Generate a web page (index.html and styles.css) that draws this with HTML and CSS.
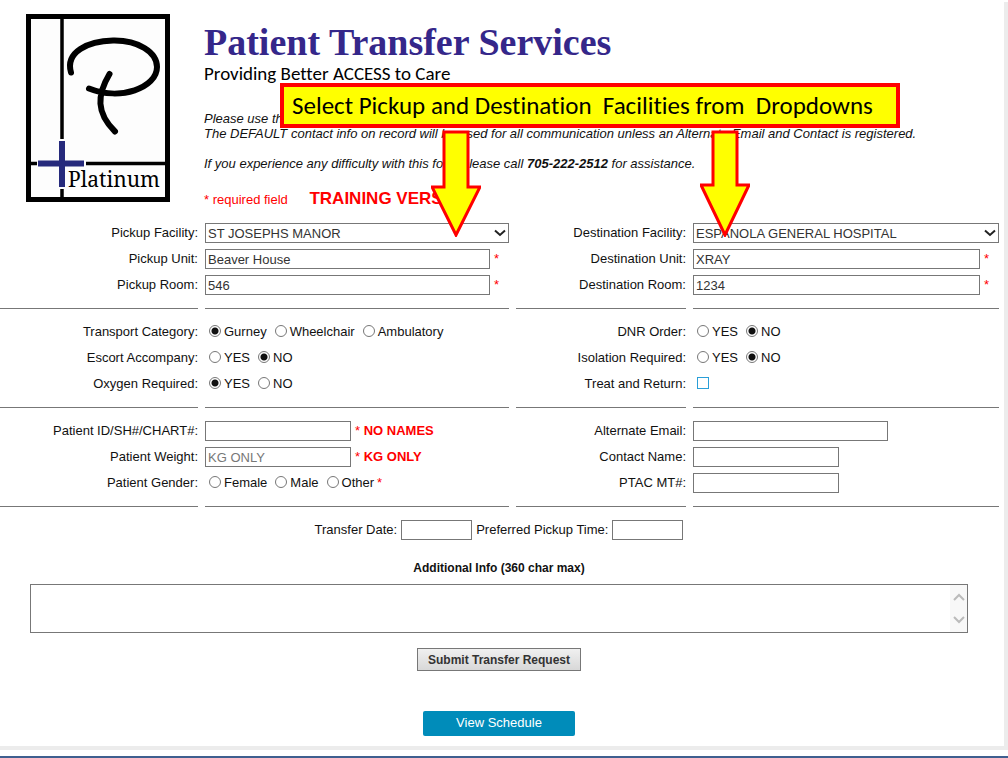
FILE: index.html
```html
<!DOCTYPE html>
<html lang="en">
<head>
    <meta charset="UTF-8">
    <meta name="viewport" content="width=device-width, initial-scale=1.0">
    <title>Patient Transfer Services</title>
    <link rel="stylesheet" href="styles.css">
</head>
<body>
    <div class="sheet">
        <!-- Logo and intro -->
        <header class="header">
            <svg class="logo" viewBox="0 0 144 188" role="img" aria-label="Platinum">
                <rect x="2.5" y="2.5" width="139" height="183" fill="#fdfdfd" stroke="#000" stroke-width="5"/>
                <path d="M36 4V125M36 175V184M4 149.500H11M60 149.500H140" fill="none" stroke="#000" stroke-width="3.500"/>
                <path d="M36 127V173M12 149.500H58" fill="none" stroke="#262a7c" stroke-width="6"/>
                <path d="M45 58.500C39 38 62 27 87 26.500C112 26 131 38 131 53C131 74 94 87 63 74.500M83.500 60C71 81 70 99 89 117.500" fill="none" stroke="#000" stroke-width="6" stroke-linecap="round"/>
                <text class="logo-text" x="42" y="173">Platinum</text>
            </svg>
            <div class="intro">
                <h1>Patient Transfer Services</h1>
                <p class="tagline">Providing Better ACCESS to Care</p>
                <p class="notes">Please use th<br>The DEFAULT contact info on record will be used for all communication unless an Alternate Email and Contact is registered.</p>
                <p class="notes">If you experience any difficulty with this form please call <b>705-222-2512</b> for assistance.</p>
                <p class="required">* required field <strong>TRAINING VERSION</strong></p>
            </div>
        </header>

        <form>
            <!-- Facilities -->
            <div class="grid">
                <label for="pickup-facility">Pickup Facility:</label>
                <div class="field facility">
                    <select id="pickup-facility"><option>ST JOSEPHS MANOR</option></select>
                    <svg class="chevron" viewBox="0 0 12 8"><path d="M1 1.500L6 6L11 1.500"/></svg>
                </div>
                <label for="dest-facility">Destination Facility:</label>
                <div class="field facility">
                    <select id="dest-facility"><option>ESPANOLA GENERAL HOSPITAL</option></select>
                    <svg class="chevron" viewBox="0 0 12 8"><path d="M1 1.500L6 6L11 1.500"/></svg>
                </div>

                <label for="pickup-unit">Pickup Unit:</label>
                <div class="field"><input class="long" type="text" id="pickup-unit" value="Beaver House"><span class="star">*</span></div>
                <label for="dest-unit">Destination Unit:</label>
                <div class="field"><input class="long" type="text" id="dest-unit" value="XRAY"><span class="star">*</span></div>

                <label for="pickup-room">Pickup Room:</label>
                <div class="field"><input class="long" type="text" id="pickup-room" value="546"><span class="star">*</span></div>
                <label for="dest-room">Destination Room:</label>
                <div class="field"><input class="long" type="text" id="dest-room" value="1234"><span class="star">*</span></div>
            </div>
            <div class="grid rule"><hr><hr><hr><hr></div>

            <!-- Transport details -->
            <div class="grid">
                <span class="label" id="category">Transport Category:</span>
                <div class="field choices" role="radiogroup" aria-labelledby="category">
                    <label><input type="radio" name="category" checked>Gurney</label>
                    <label><input type="radio" name="category">Wheelchair</label>
                    <label><input type="radio" name="category">Ambulatory</label>
                </div>
                <span class="label" id="dnr">DNR Order:</span>
                <div class="field choices" role="radiogroup" aria-labelledby="dnr">
                    <label><input type="radio" name="dnr">YES</label>
                    <label><input type="radio" name="dnr" checked>NO</label>
                </div>

                <span class="label" id="escort">Escort Accompany:</span>
                <div class="field choices" role="radiogroup" aria-labelledby="escort">
                    <label><input type="radio" name="escort">YES</label>
                    <label><input type="radio" name="escort" checked>NO</label>
                </div>
                <span class="label" id="isolation">Isolation Required:</span>
                <div class="field choices" role="radiogroup" aria-labelledby="isolation">
                    <label><input type="radio" name="isolation">YES</label>
                    <label><input type="radio" name="isolation" checked>NO</label>
                </div>

                <span class="label" id="oxygen">Oxygen Required:</span>
                <div class="field choices" role="radiogroup" aria-labelledby="oxygen">
                    <label><input type="radio" name="oxygen" checked>YES</label>
                    <label><input type="radio" name="oxygen">NO</label>
                </div>
                <label for="treat">Treat and Return:</label>
                <div class="field choices"><input type="checkbox" id="treat"></div>
            </div>
            <div class="grid rule"><hr><hr><hr><hr></div>

            <!-- Patient and contact -->
            <div class="grid">
                <label for="patient-id">Patient ID/SH#/CHART#:</label>
                <div class="field"><input class="short" type="text" id="patient-id"><span class="star">* <b>NO NAMES</b></span></div>
                <label for="email">Alternate Email:</label>
                <div class="field"><input class="medium" type="text" id="email"></div>

                <label for="weight">Patient Weight:</label>
                <div class="field"><input class="short" type="text" id="weight" placeholder="KG ONLY"><span class="star">* <b>KG ONLY</b></span></div>
                <label for="contact">Contact Name:</label>
                <div class="field"><input class="short" type="text" id="contact"></div>

                <span class="label" id="gender">Patient Gender:</span>
                <div class="field choices" role="radiogroup" aria-labelledby="gender">
                    <label><input type="radio" name="gender">Female</label>
                    <label><input type="radio" name="gender">Male</label>
                    <label><input type="radio" name="gender">Other <span class="star">*</span></label>
                </div>
                <label for="ptac">PTAC MT#:</label>
                <div class="field"><input class="short" type="text" id="ptac"></div>
            </div>
            <div class="grid rule"><hr><hr><hr><hr></div>

            <!-- Date, notes and buttons -->
            <div class="schedule">
                <label for="date">Transfer Date:</label>
                <input type="text" id="date">
                <label for="time">Preferred Pickup Time:</label>
                <input type="text" id="time">
            </div>
            <div class="info">
                <label for="info">Additional Info (360 char max)</label>
                <div class="info-box">
                    <textarea id="info" maxlength="360"></textarea>
                    <div class="scroller">
                        <svg viewBox="0 0 12 8"><path d="M1 7L6 2L11 7"/></svg>
                        <svg viewBox="0 0 12 8"><path d="M1 1L6 6L11 1"/></svg>
                    </div>
                </div>
            </div>
            <div class="actions">
                <button type="submit" class="submit">Submit Transfer Request</button>
                <a href="#" class="view">View Schedule</a>
            </div>
        </form>
    </div>

    <!-- Training callout over the form -->
    <div class="callout">Select Pickup and Destination&nbsp; Facilities from&nbsp; Dropdowns</div>
    <svg class="arrow arrow-pickup" viewBox="0 0 50 108"><path d="M13 3H37V58H49L25 106L1 58H13Z"/></svg>
    <svg class="arrow arrow-dest" viewBox="0 0 50 108"><path d="M13 3H37V56H49L25 106L1 56H13Z"/></svg>
</body>
</html>
```
FILE: styles.css
```css
* {
    box-sizing: border-box;
}

body {
    position: relative;
    margin: 0;
    padding: 2px 0 6px;
    background: #fff;
    border-bottom: 2px solid #3f5f8f;
    color: #111;
    font: 13px/20px "Liberation Sans", Arial, sans-serif;
}

.sheet {
    border-right: 4px solid #ececec;
    border-bottom: 4px solid #ececec;
    padding-bottom: 10px;
}

/* Header */
.header {
    display: flex;
    gap: 34px;
    padding: 12px 5px 0 26px;
}

.logo {
    flex: none;
    width: 144px;
    height: 188px;
}

.logo-text {
    font: 21px "Noto Serif", "Liberation Serif", serif;
}

.intro {
    flex: 1;
}

h1 {
    margin: 6px 0 0;
    color: #35278a;
    font: bold 38px/44px "Liberation Serif", "Times New Roman", serif;
}

.tagline {
    margin: 0 0 27px;
    color: #000;
    font: 19px/20px Carlito, Lato, sans-serif;
    font-variant-ligatures: none;
}

.notes {
    margin: 0 0 15px;
    line-height: 15px;
    font-style: italic;
}

.required {
    margin: 0;
    padding-top: 3px;
    color: #f00;
}

.required strong {
    margin-left: 18px;
    font-size: 17px;
}

/* Form rows */
form {
    padding-top: 13px;
}

.grid {
    display: grid;
    grid-template-columns: 198fr 304fr 170fr 306fr;
    gap: 6px 7px;
    padding-right: 5px;
}

.grid > label,
.label {
    text-align: right;
}

.rule {
    padding: 13px 5px 13px 0;
}

hr {
    width: 100%;
    margin: 0;
    border: 0;
    border-top: 1px solid #777;
}

.field {
    display: flex;
    position: relative;
}

input,
select,
textarea {
    border: 1px solid #777;
    border-radius: 0;
    background: #fff;
    color: #333;
    font: 13px "Liberation Sans", Arial, sans-serif;
}

input[type="text"] {
    height: 20px;
    padding: 0 2px;
}

input::placeholder {
    color: #777;
}

select {
    appearance: none;
    width: 100%;
    height: 20px;
    padding: 0 2px;
}

.chevron {
    position: absolute;
    top: 6px;
    right: 3px;
    width: 12px;
    height: 8px;
    fill: none;
    stroke: #222;
    stroke-width: 2;
    pointer-events: none;
}

.long {
    flex: 1;
    margin-right: 4px;
}

.long + .star {
    width: 15px;
}

.medium {
    width: 195px;
}

.short {
    width: 146px;
    margin-right: 4px;
}

.star {
    color: #f00;
}

/* Radios and tick box */
.choices {
    gap: 8px;
    padding-left: 4px;
}

.choices label {
    display: flex;
    gap: 3px;
}

input[type="radio"],
input[type="checkbox"] {
    appearance: none;
    width: 12px;
    height: 12px;
    margin: 3px 0 0;
}

input[type="radio"] {
    border-radius: 50%;
}

input[type="radio"]:checked {
    background: radial-gradient(circle, #111 3px, #fff 4px);
}

input[type="checkbox"] {
    border-color: #2a9fd8;
}

/* Lower part */
.schedule {
    display: flex;
    justify-content: center;
    gap: 4px;
    padding-right: 6px;
}

.schedule input {
    width: 71px;
}

.info {
    padding: 18px 36px 0 30px;
    text-align: center;
}

.info label {
    display: block;
    font-size: 12px;
    font-weight: bold;
}

.info-box {
    position: relative;
    margin-top: 6px;
}

textarea {
    display: block;
    width: 100%;
    height: 49px;
    resize: none;
}

.scroller {
    display: flex;
    flex-direction: column;
    justify-content: space-between;
    position: absolute;
    top: 1px;
    right: 1px;
    bottom: 1px;
    width: 17px;
    padding: 8px 3px;
    background: #f8f8f8;
    pointer-events: none;
}

.scroller svg {
    width: 12px;
    height: 8px;
    fill: none;
    stroke: #bbb;
    stroke-width: 2;
}

.actions {
    display: flex;
    flex-direction: column;
    align-items: center;
    gap: 40px;
    padding: 15px 6px 0 0;
}

.submit {
    height: 23px;
    padding: 0 10px;
    border: 1px solid #777;
    background: linear-gradient(#f0f0f0, #d8d8d8);
    color: #333;
    font: bold 12px "Liberation Sans", Arial, sans-serif;
}

.view {
    padding: 2px 33px 3px;
    border-radius: 2px;
    background: #008cba;
    color: #fff;
    text-decoration: none;
}

/* Training callout */
.callout {
    position: absolute;
    top: 83px;
    left: 280px;
    padding: 0 23px 0 8px;
    border: 4px solid #f00;
    background: #ff0;
    color: #000;
    font: 25px/37px Carlito, Lato, sans-serif;
    font-variant-ligatures: none;
    white-space: nowrap;
}

.arrow {
    position: absolute;
    top: 129px;
    width: 50px;
    height: 108px;
    fill: #ff0;
    stroke: #f00;
    stroke-width: 3;
}

.arrow-pickup {
    left: 431px;
}

.arrow-dest {
    left: 700px;
}
```
